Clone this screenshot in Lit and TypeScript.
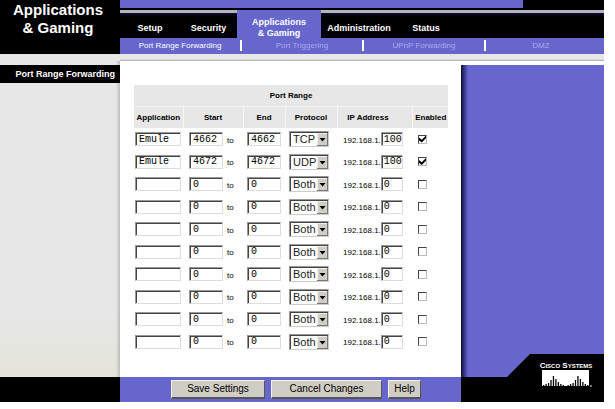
import { LitElement, html, css, svg } from "lit";
import { customElement, property, state } from "lit/decorators.js";
import { classMap } from "lit/directives/class-map.js";

interface ForwardRule {
  app: string;
  start: string;
  end: string;
  protocol: string;
  host: string;
  enabled: boolean;
}

const emptyRule = (): ForwardRule => ({
  app: "",
  start: "0",
  end: "0",
  protocol: "Both",
  host: "0",
  enabled: false,
});

@customElement("cisco-logo")
class CiscoLogo extends LitElement {
  static styles = css`
    :host {
      display: flex;
      flex-direction: column;
      align-items: center;
      width: 48px;
      color: #fff;
    }
    .name {
      font: bold 8px/8px "Liberation Sans Narrow", "Liberation Sans", sans-serif;
      font-variant: small-caps;
      white-space: nowrap;
    }
    svg {
      display: block;
      overflow: visible;
    }
  `;

  private bars = [2, 3, 4, 7, 11, 8, 5, 3, 2, 1, 2, 3, 4, 7, 11, 8, 5, 3, 2];

  render() {
    return html`
      <span class="name">Cisco Systems</span>
      <svg width="48" height="18" viewBox="0 0 48 18" aria-hidden="true">
        <rect width="47" height="16" fill="#fff" />
        ${this.bars.map(
          (h, i) => svg`<rect x=${1 + i * 2.45} y=${17 - h} width="1.3" height=${h} fill="#000" />`
        )}
        <circle cx="49" cy="16" r="1" fill="#999" />
      </svg>
    `;
  }
}

@customElement("forward-table")
class ForwardTable extends LitElement {
  static styles = css`
    :host {
      display: block;
    }
    table {
      width: 100%;
      border-collapse: collapse;
      table-layout: fixed;
      font-size: 8px;
      line-height: 10px;
    }
    th,
    td {
      padding: 0;
    }
    th {
      height: 21px;
      background: #e7e7e7;
      white-space: nowrap;
    }
    thead tr + tr th {
      border-top: 1px solid #f6f6f6;
    }
    th + th {
      border-left: 1px solid #f6f6f6;
    }
    th.ip {
      padding-right: 14px;
    }
    .c-app { width: 49px; }
    .c-start { width: 60px; }
    .c-end { width: 42px; }
    .c-proto { width: 52px; }
    .c-on { width: 35px; }
    tbody tr { height: 22px; }
    tbody tr:nth-child(even) { height: 23px; }
    .line {
      display: flex;
      align-items: center;
      height: 16px;
    }
    .pad-s { padding-left: 1px; }
    .pad-m { padding-left: 4px; }
    .pad-l { padding-left: 6px; }
    .low { padding-top: 3px; }
    .text {
      box-sizing: border-box;
      height: 14px;
      margin: 0;
      padding: 0 0 0 3px;
      border: 1px solid #ddd;
      border-top-color: #999;
      border-left-color: #999;
      border-radius: 0;
      box-shadow: inset 1px 1px #444;
      background: #fff;
      color: #000;
      font: 10px/12px "Liberation Mono", monospace;
    }
    .app { width: 46px; }
    .port { width: 34px; }
    .host { width: 22px; padding-left: 2px; }
    .to { padding-left: 4px; }
    .pick {
      position: relative;
      display: block;
      width: 40px;
      height: 16px;
    }
    select {
      appearance: none;
      box-sizing: border-box;
      width: 100%;
      height: 100%;
      margin: 0;
      padding: 0 0 0 3px;
      border: 1px solid #ccc;
      border-top-color: #999;
      border-left-color: #999;
      border-radius: 0;
      box-shadow: inset 1px 1px #444;
      background: #fff;
      color: #222;
      font: 11px/14px "Liberation Sans", Arial, sans-serif;
    }
    .pick svg {
      position: absolute;
      right: 1px;
      top: 2px;
      pointer-events: none;
    }
    .tick {
      appearance: none;
      box-sizing: border-box;
      display: block;
      width: 9px;
      height: 9px;
      margin: 0 0 0 1px;
      border: 1px solid #bbb;
      border-top-color: #444;
      border-left-color: #444;
      background: #fff;
    }
    .tick:checked::after {
      content: "";
      display: block;
      width: 7px;
      height: 7px;
      background: #000;
      clip-path: polygon(0 30%, 40% 62%, 100% 0, 100% 38%, 40% 100%, 0 68%);
    }
  `;

  @property({ attribute: false }) rules: ForwardRule[] = [];

  private row(rule: ForwardRule, i: number) {
    const n = i + 1;
    return html`
      <tr>
        <td><div class="line pad-s">
          <input class="text app" aria-label="Application ${n}" .value=${rule.app} />
        </div></td>
        <td><div class="line pad-l">
          <input class="text port" aria-label="Start port ${n}" .value=${rule.start} />
          <span class="to low">to</span>
        </div></td>
        <td><div class="line pad-m">
          <input class="text port" aria-label="End port ${n}" .value=${rule.end} />
        </div></td>
        <td><div class="line pad-m">
          <span class="pick">
            <select aria-label="Protocol ${n}">
              ${["TCP", "UDP", "Both"].map(
                (p) => html`<option ?selected=${p === rule.protocol}>${p}</option>`
              )}
            </select>
            <svg width="11" height="13" viewBox="0 0 11 13" aria-hidden="true">
              <rect width="11" height="13" fill="#777" />
              <rect width="10" height="12" fill="#f2f0ea" />
              <rect x="1" y="1" width="9" height="11" fill="#d0cdc4" />
              <path d="M2.5 5h6l-3 3.5z" fill="#000" />
            </svg>
          </span>
        </div></td>
        <td><div class="line pad-l">
          <label class="low" for="host-${n}">192.168.1.</label>
          <input class="text host" id="host-${n}" .value=${rule.host} />
        </div></td>
        <td><div class="line pad-m">
          <input class="tick" type="checkbox" aria-label="Enable ${n}" .checked=${rule.enabled} />
        </div></td>
      </tr>
    `;
  }

  render() {
    return html`
      <table>
        <colgroup>
          <col class="c-app" /><col class="c-start" /><col class="c-end" />
          <col class="c-proto" /><col /><col class="c-on" />
        </colgroup>
        <thead>
          <tr><th colspan="6">Port Range</th></tr>
          <tr>
            <th>Application</th><th>Start</th><th>End</th>
            <th>Protocol</th><th class="ip">IP Address</th><th>Enabled</th>
          </tr>
        </thead>
        <tbody>${this.rules.map((r, i) => this.row(r, i))}</tbody>
      </table>
    `;
  }
}

@customElement("app-root")
class AppRoot extends LitElement {
  static styles = css`
    :host {
      display: block;
      padding-right: 11px;
      background: #fff;
      color: #000;
      font-family: "Liberation Sans", Arial, sans-serif;
    }
    .page {
      display: grid;
      grid-template-columns: 120px minmax(0, 1fr) 143px;
    }
    .brand {
      margin: 0;
      padding: 1px 4px 0 0;
      background: #000;
      color: #fff;
      font-size: 15px;
      line-height: 18px;
      text-align: center;
    }
    .top {
      grid-column: 2 / 4;
      display: flex;
      flex-direction: column;
      background: #000;
    }
    .band {
      height: 8px;
      margin-right: 81px;
      background: #6666cc;
    }
    .tabs {
      display: grid;
      grid-template-columns: 60px 57px 84px 76px 58px;
      height: 28px;
      margin-top: 2px;
      background: linear-gradient(#b4b4bc 0 3px, #101030 3px, #000 7px);
    }
    .tab {
      display: flex;
      align-items: center;
      justify-content: center;
      padding-top: 7px;
      color: #fff;
      font-size: 9px;
      font-weight: bold;
      line-height: 11px;
      text-align: center;
      text-decoration: none;
    }
    .tab span {
      max-width: 64px;
    }
    .tab.active {
      background: #6666cc;
    }
    .subs {
      display: grid;
      grid-template-columns: 122px 122px 122px 1fr;
      padding: 2px 8px 3px 0;
      background: #6666cc;
    }
    .sub {
      border-right: 2px solid #fff;
      color: #aaaaf0;
      font-size: 8px;
      line-height: 11px;
      text-align: center;
      text-decoration: none;
    }
    .sub.active {
      color: #fff;
    }
    .sub:last-child {
      border: 0;
    }
    .strip {
      grid-column: 1 / 4;
      height: 7px;
      background: linear-gradient(to right, #e7e7e7 0 120px, transparent 120px),
        linear-gradient(#e7e7e7 0 5px, #aaa);
    }
    .side {
      padding-top: 4px;
      background: linear-gradient(to right, transparent 116px, #bbb), linear-gradient(#e7e7e7 80%, #e4e4da);
    }
    .section {
      margin: 0;
      padding-right: 5px;
      background: #000;
      color: #fff;
      font-size: 9px;
      line-height: 18px;
      text-align: right;
      white-space: nowrap;
    }
    .main {
      padding: 24px 13px 24px 14px;
    }
    .panel {
      display: flex;
      flex-direction: column;
      justify-content: flex-end;
      margin-top: 4px;
      background: linear-gradient(to right, #0c0c30, #333380 3px, #6666cc 7px);
    }
    .slope {
      height: 23px;
      background: #000;
      clip-path: polygon(0 100%, 46px 100%, 69px 0, 100% 0, 100% 100%);
    }
    .foot-side {
      background: #000;
    }
    .actions {
      display: grid;
      grid-template-columns: 94px 111px 33px;
      gap: 6px;
      padding: 3px 0 3px 51px;
      background: #6666cc;
    }
    .button {
      box-sizing: border-box;
      height: 19px;
      margin: 0;
      padding: 0;
      border: 1px solid #f2f0ea;
      border-right-color: #555;
      border-bottom: 2px solid #555;
      border-radius: 0;
      background: #d0cdc4;
      color: #000;
      font: 10px/14px "Liberation Sans", Arial, sans-serif;
      white-space: nowrap;
    }
    .foot-logo {
      display: flex;
      justify-content: flex-end;
      padding-right: 14px;
      background: #000;
    }
    cisco-logo {
      position: relative;
      margin-top: -15px;
    }
  `;

  @state() private rules: ForwardRule[] = [
    { app: "Emule", start: "4662", end: "4662", protocol: "TCP", host: "100", enabled: true },
    { app: "Emule", start: "4672", end: "4672", protocol: "UDP", host: "100", enabled: true },
    ...Array.from({ length: 8 }, emptyRule),
  ];

  private tabs = ["Setup", "Security", "Applications & Gaming", "Administration", "Status"];
  private subs = ["Port Range Forwarding", "Port Triggering", "UPnP Forwarding", "DMZ"];

  render() {
    return html`
      <div class="page">
        <h1 class="brand">Applications<br />&amp; Gaming</h1>
        <header class="top">
          <div class="band"></div>
          <nav class="tabs">
            ${this.tabs.map(
              (t, i) =>
                html`<a href="#" class=${classMap({ tab: true, active: i === 2 })}><span>${t.replace("& ", "&\u00a0")}</span></a>`
            )}
          </nav>
          <nav class="subs">
            ${this.subs.map(
              (t, i) => html`<a href="#" class=${classMap({ sub: true, active: i === 0 })}>${t}</a>`
            )}
          </nav>
        </header>
        <div class="strip"></div>
        <aside class="side"><h2 class="section">Port Range Forwarding</h2></aside>
        <main class="main"><forward-table .rules=${this.rules}></forward-table></main>
        <div class="panel"><div class="slope"></div></div>
        <div class="foot-side"></div>
        <div class="actions">
          <button class="button">Save Settings</button>
          <button class="button">Cancel Changes</button>
          <button class="button">Help</button>
        </div>
        <div class="foot-logo"><cisco-logo></cisco-logo></div>
      </div>
    `;
  }
}
